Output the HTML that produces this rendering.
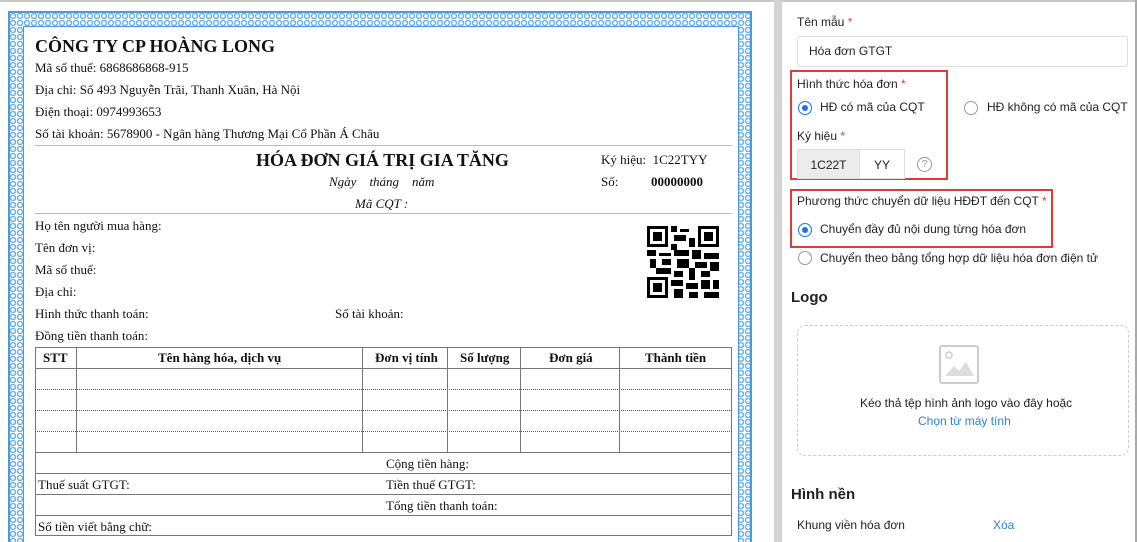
<!DOCTYPE html><html><head><meta charset="utf-8"><style>
html,body{margin:0;width:1137px;height:542px;overflow:hidden;background:#fff;position:relative;font-family:"Liberation Serif",serif;}
.a{position:absolute;white-space:nowrap}
.s{font-family:"Liberation Sans",sans-serif;font-size:12px;color:#222}
.t{font-size:13px;color:#111}
.frame{position:absolute;left:8px;top:11px;width:744px;height:540px;border:2px solid #4a9ad8;box-sizing:border-box;
background:radial-gradient(circle at 3px 3px,#fff 0 1.5px,#6fb2e6 2px 3px,#fff 3.5px) 0 0/7px 7px;}
.inner{position:absolute;left:23px;top:26px;width:714px;height:530px;background:#fff;border:1px solid #4a9ad8}
.hl{position:absolute;height:1px;background:#bbb}
.vl{position:absolute;width:1px;background:#777}
.dl{position:absolute;height:0;border-top:1px dotted #555}
.red{position:absolute;border:2px solid #e03b3b}
.radio{position:absolute;width:14px;height:14px;border-radius:50%;border:1px solid #999;box-sizing:border-box;background:#fff}
.radio.on{border-color:#1a73e8}
.radio.on::after{content:"";position:absolute;left:3px;top:3px;width:6px;height:6px;border-radius:50%;background:#1a73e8}
.star{color:#e03b3b}
</style></head><body>
<div class="a" style="left:0;top:0;width:1137px;height:2px;background:#c8c8c8"></div>
<div class="frame"></div>
<div class="inner"></div>
<div class="a" style="left:35px;top:36px;font-size:18px;font-weight:bold;color:#111">CÔNG TY CP HOÀNG LONG</div>
<div class="a t" style="left:35px;top:60px">Mã số thuế: 6868686868-915</div>
<div class="a t" style="left:35px;top:82px">Địa chỉ: Số 493 Nguyễn Trãi, Thanh Xuân, Hà Nội</div>
<div class="a t" style="left:35px;top:104px">Điện thoại: 0974993653</div>
<div class="a t" style="left:35px;top:126px">Số tài khoản: 5678900 - Ngân hàng Thương Mại Cổ Phần Á Châu</div>
<div class="hl" style="left:35px;top:145px;width:697px"></div>
<div class="a" style="left:256px;top:150px;font-size:18px;font-weight:bold;color:#111">HÓA ĐƠN GIÁ TRỊ GIA TĂNG</div>
<div class="a t" style="left:329px;top:174px;font-style:italic">Ngày &nbsp;&nbsp; tháng &nbsp;&nbsp; năm</div>
<div class="a t" style="left:355px;top:196px;font-style:italic">Mã CQT :</div>
<div class="a t" style="left:601px;top:152px">Ký hiệu: &nbsp;1C22TYY</div>
<div class="a t" style="left:601px;top:174px">Số:</div>
<div class="a t" style="left:651px;top:174px;font-weight:bold">00000000</div>
<div class="hl" style="left:35px;top:213px;width:697px"></div>
<svg class="a" style="left:647px;top:226px" width="72" height="72" viewBox="0 0 24 24" shape-rendering="crispEdges"><rect x="0" y="0" width="7" height="7"/><rect x="1" y="1" width="5" height="5" fill="#fff"/><rect x="2" y="2" width="3" height="3"/><rect x="17" y="0" width="7" height="7"/><rect x="18" y="1" width="5" height="5" fill="#fff"/><rect x="19" y="2" width="3" height="3"/><rect x="0" y="17" width="7" height="7"/><rect x="1" y="18" width="5" height="5" fill="#fff"/><rect x="2" y="19" width="3" height="3"/><path d="M8 0h2v2h-2zM11 1h3v1h-3zM9 3h4v2h-4zM14 4h2v3h-2zM8 6h2v2h-2zM0 8h3v2h-3zM4 9h4v1h-4zM9 8h5v2h-5zM15 8h3v3h-3zM19 9h5v2h-5zM1 11h2v3h-2zM5 11h3v2h-3zM10 11h4v3h-4zM16 12h4v2h-4zM21 12h3v3h-3zM3 14h5v2h-5zM9 15h3v2h-3zM14 14h2v4h-2zM18 15h3v2h-3zM8 18h4v2h-4zM13 19h4v2h-4zM18 18h3v3h-3zM22 18h2v3h-2zM9 21h3v3h-3zM14 22h3v2h-3zM19 22h5v2h-5z"/></svg>
<div class="a t" style="left:35px;top:218px">Họ tên người mua hàng:</div>
<div class="a t" style="left:35px;top:240px">Tên đơn vị:</div>
<div class="a t" style="left:35px;top:262px">Mã số thuế:</div>
<div class="a t" style="left:35px;top:284px">Địa chỉ:</div>
<div class="a t" style="left:35px;top:306px">Hình thức thanh toán:</div>
<div class="a t" style="left:335px;top:306px">Số tài khoản:</div>
<div class="a t" style="left:35px;top:328px">Đồng tiền thanh toán:</div>
<div class="a" style="left:35px;top:347px;width:697px;height:189px;border:1px solid #777;box-sizing:border-box"></div>
<div class="a" style="left:35px;top:368px;width:697px;height:1px;background:#777"></div>
<div class="dl" style="left:35px;top:389px;width:697px"></div>
<div class="dl" style="left:35px;top:410px;width:697px"></div>
<div class="dl" style="left:35px;top:431px;width:697px"></div>
<div class="a" style="left:35px;top:452px;width:697px;height:1px;background:#777"></div>
<div class="a" style="left:35px;top:473px;width:697px;height:1px;background:#777"></div>
<div class="a" style="left:35px;top:494px;width:697px;height:1px;background:#777"></div>
<div class="a" style="left:35px;top:515px;width:697px;height:1px;background:#777"></div>
<div class="vl" style="left:76px;top:347px;height:105px"></div>
<div class="vl" style="left:362px;top:347px;height:105px"></div>
<div class="vl" style="left:447px;top:347px;height:105px"></div>
<div class="vl" style="left:520px;top:347px;height:105px"></div>
<div class="vl" style="left:619px;top:347px;height:105px"></div>
<div class="a t" style="left:43px;top:350px;font-weight:bold">STT</div>
<div class="a t" style="left:158px;top:350px;font-weight:bold">Tên hàng hóa, dịch vụ</div>
<div class="a t" style="left:375px;top:350px;font-weight:bold">Đơn vị tính</div>
<div class="a t" style="left:460px;top:350px;font-weight:bold">Số lượng</div>
<div class="a t" style="left:549px;top:350px;font-weight:bold">Đơn giá</div>
<div class="a t" style="left:645px;top:350px;font-weight:bold">Thành tiền</div>
<div class="a t" style="left:386px;top:456px">Cộng tiền hàng:</div>
<div class="a t" style="left:38px;top:477px">Thuế suất GTGT:</div>
<div class="a t" style="left:386px;top:477px">Tiền thuế GTGT:</div>
<div class="a t" style="left:386px;top:498px">Tổng tiền thanh toán:</div>
<div class="a t" style="left:38px;top:519px">Số tiền viết bằng chữ:</div>
<div class="a" style="left:774px;top:0;width:8px;height:542px;background:#d4d4d8"></div>
<div class="a" style="left:1135px;top:0;width:2px;height:542px;background:#aaa"></div>
<div class="a s" style="left:797px;top:15px">Tên mẫu <span class="star">*</span></div>
<div class="a s" style="left:797px;top:36px;width:331px;height:31px;border:1px solid #ddd;border-radius:3px;box-sizing:border-box;padding:7px 11px">Hóa đơn GTGT</div>
<div class="red" style="left:790px;top:70px;width:154px;height:106px"></div>
<div class="a s" style="left:797px;top:77px">Hình thức hóa đơn <span class="star">*</span></div>
<div class="radio on" style="left:798px;top:101px"></div>
<div class="a s" style="left:820px;top:100px">HĐ có mã của CQT</div>
<div class="radio" style="left:964px;top:101px"></div>
<div class="a s" style="left:987px;top:100px">HĐ không có mã của CQT</div>
<div class="a s" style="left:797px;top:129px">Ký hiệu <span class="star">*</span></div>
<div class="a s" style="left:797px;top:149px;width:63px;height:30px;background:#ececec;border:1px solid #ddd;box-sizing:border-box;padding:8px 0;text-align:center">1C22T</div>
<div class="a s" style="left:859px;top:149px;width:46px;height:30px;border:1px solid #ddd;box-sizing:border-box;padding:8px 0;text-align:center">YY</div>
<div class="a" style="left:917px;top:157px;width:13px;height:13px;border:1px solid #999;border-radius:50%;font:10px 'Liberation Sans',sans-serif;color:#999;text-align:center;line-height:13px">?</div>
<div class="red" style="left:790px;top:189px;width:259px;height:55px"></div>
<div class="a s" style="left:797px;top:194px">Phương thức chuyển dữ liệu HĐĐT đến CQT <span class="star">*</span></div>
<div class="radio on" style="left:798px;top:223px"></div>
<div class="a s" style="left:820px;top:222px">Chuyển đầy đủ nội dung từng hóa đơn</div>
<div class="radio" style="left:798px;top:251px"></div>
<div class="a s" style="left:820px;top:251px">Chuyển theo bảng tổng hợp dữ liệu hóa đơn điện tử</div>
<div class="a s" style="left:791px;top:289px;font-size:15px;font-weight:bold;color:#222">Logo</div>
<div class="a" style="left:797px;top:325px;width:332px;height:131px;border:1px dashed #ccc;border-radius:8px;box-sizing:border-box"></div>
<svg class="a" style="left:939px;top:345px" width="40" height="40" viewBox="0 0 40 40"><rect x="1" y="1" width="38" height="37" rx="2" fill="none" stroke="#ccc" stroke-width="2"/><circle cx="10" cy="10" r="3" fill="none" stroke="#ccc" stroke-width="1.5"/><path d="M6 31l9-10 5 5 7-9 8 14z" fill="#ddd"/></svg>
<div class="a s" style="left:860px;top:396px">Kéo thả tệp hình ảnh logo vào đây hoặc</div>
<div class="a s" style="left:918px;top:414px;color:#2b84d8">Chọn từ máy tính</div>
<div class="a s" style="left:791px;top:486px;font-size:15px;font-weight:bold;color:#222">Hình nền</div>
<div class="a s" style="left:797px;top:518px">Khung viền hóa đơn</div>
<div class="a s" style="left:993px;top:518px;color:#2b84d8">Xóa</div>
</body></html>
